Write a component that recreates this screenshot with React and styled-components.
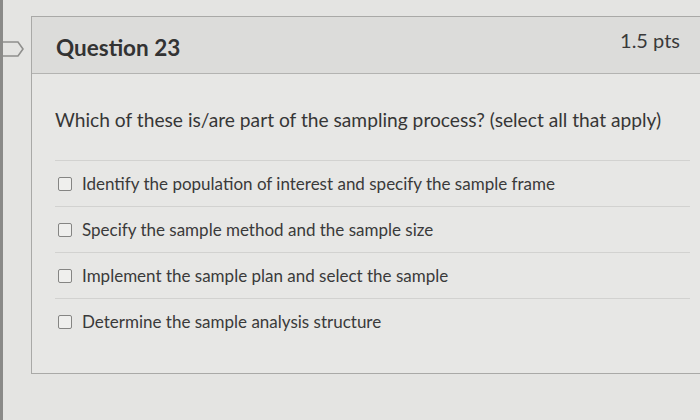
import React from "react";
import styled, { createGlobalStyle } from "styled-components";

const Global = createGlobalStyle`
  html, body { margin: 0; padding: 0; background: #e3e3e1; }
  body { font-family: Lato, "Open Sans", sans-serif; color: #3b3b3b; overflow: hidden; }
`;

const Page = styled.div`
  display: flex;
  width: 700px;
  height: 420px;
  overflow: hidden;
  background: #e4e4e2;
`;

const Rail = styled.div`
  width: 3px;
  flex: none;
  background: #8a8a88;
`;

const Gutter = styled.div`
  width: 28px;
  flex: none;
  padding-top: 40px;
  box-sizing: border-box;
`;

const Card = styled.div`
  margin-top: 16px;
  flex: none;
  width: 690px;
  height: 358px;
  border: 1px solid #a9a9a7;
  border-right: none;
  background: #e7e7e5;
  box-sizing: border-box;
  display: flex;
  flex-direction: column;
`;

const Header = styled.div`
  height: 57px;
  flex: none;
  background: #dcdcda;
  border-bottom: 1px solid #b3b3b1;
  display: flex;
  align-items: center;
  justify-content: space-between;
  padding: 0 41px 0 24px;
  box-sizing: border-box;
`;

const Title = styled.h2`
  margin: 0;
  font-size: 22.5px;
  font-weight: 700;
  color: #333;
  padding-top: 4px;
`;

const Points = styled.span`
  font-size: 20px;
  font-weight: 400;
  color: #3a3a3a;
  margin-bottom: 10px;
`;

const Body = styled.div`
  padding: 0 31px 0 23px;
`;

const Prompt = styled.p`
  margin: 0;
  height: 86px;
  padding-top: 34px;
  box-sizing: border-box;
  font-size: 19.2px;
  color: #363636;
`;

const Option = styled.label`
  display: flex;
  align-items: center;
  height: 46px;
  border-top: 1px solid #d2d2d0;
  padding-left: 3px;
  gap: 10px;
  font-size: 17px;
  color: #3a3a3a;
  box-sizing: border-box;
`;

const Box = styled.span`
  width: 12px;
  height: 12px;
  border: 1.5px solid #858583;
  border-radius: 2px;
  background: #efefed;
  flex: none;
`;

const options = [
  "Identify the population of interest and specify the sample frame",
  "Specify the sample method and the sample size",
  "Implement the sample plan and select the sample",
  "Determine the sample analysis structure",
];

export default function App() {
  return (
    <>
      <Global />
      <Page>
        <Rail />
        <Gutter>
          <svg width="22" height="18" viewBox="0 0 22 18">
            <path d="M-2 2 H15 L20 9 L15 16 H-2" fill="none" stroke="#8f8f8d" strokeWidth="1.6" />
          </svg>
        </Gutter>
        <Card>
          <Header>
            <Title>Question 23</Title>
            <Points>1.5 pts</Points>
          </Header>
          <Body>
            <Prompt>Which of these is/are part of the sampling process? (select all that apply)</Prompt>
            {options.map((o) => (
              <Option key={o}>
                <Box />
                {o}
              </Option>
            ))}
          </Body>
        </Card>
      </Page>
    </>
  );
}
